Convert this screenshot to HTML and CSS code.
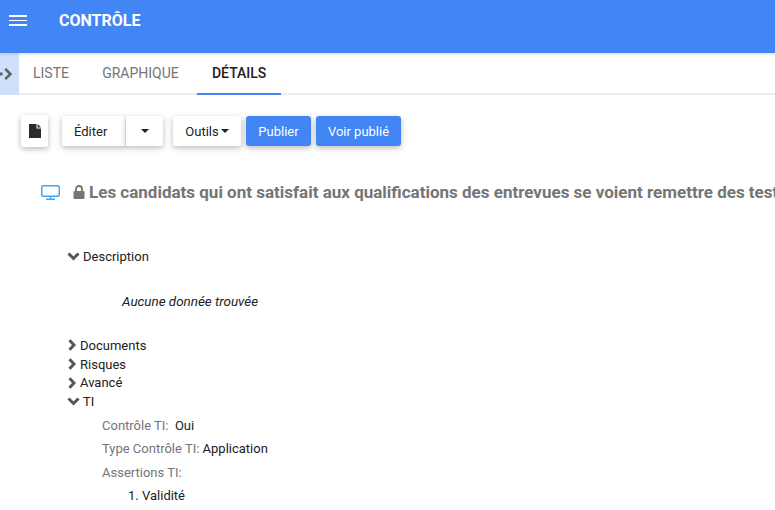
FILE: index.html
```html
<!DOCTYPE html>
<html lang="fr">
<head>
<meta charset="utf-8">
<title>Contrôle</title>
<link rel="stylesheet" href="styles.css">
</head>
<body>
<header class="appbar">
  <div class="burger"><span></span><span></span><span></span></div>
  <h1 class="apptitle">CONTRÔLE</h1>
</header>
<nav class="tabbar">
  <div class="sidetoggle">
    <svg width="12" height="14" viewBox="0 0 12 14"><path d="M0 7h2.6" stroke="#616161" stroke-width="3" fill="none"/><path d="M5.2 1.8L10.4 7l-5.2 5.2" stroke="#616161" stroke-width="2.6" fill="none"/></svg>
  </div>
  <a class="tab">LISTE</a>
  <a class="tab">GRAPHIQUE</a>
  <a class="tab active">DÉTAILS</a>
</nav>
<main class="content">
  <div class="toolbar">
    <button class="btn icon-btn">
      <svg width="12" height="14" viewBox="0 0 12 14"><path d="M0 0h7.5v4.5H12V14H0z" fill="#2b2b2b"/><path d="M8.5 0L12 3.5H8.5z" fill="#2b2b2b"/></svg>
    </button>
    <div class="btn-group">
      <button class="btn edit">Éditer</button>
      <button class="btn split"><span class="caret"></span></button>
    </div>
    <button class="btn tools">Outils<span class="caret small"></span></button>
    <button class="btn primary publish">Publier</button>
    <button class="btn primary view">Voir publié</button>
  </div>
  <div class="titlerow">
    <svg class="monitor" width="19" height="15" viewBox="0 0 19 15"><rect x="0.75" y="0.75" width="17.5" height="10.5" rx="1.5" fill="none" stroke="#42a5f5" stroke-width="1.5"/><path d="M9.5 11.5v2.5M5 14.25h9" stroke="#42a5f5" stroke-width="1.3" fill="none"/></svg>
    <svg class="lock" width="12" height="14" viewBox="0 0 12 14"><path d="M3 6V4a3 3 0 0 1 6 0v2" fill="none" stroke="#757575" stroke-width="1.8"/><rect x="0.5" y="6" width="11" height="8" rx="1" fill="#757575"/></svg>
    <h2 class="title">Les candidats qui ont satisfait aux qualifications des entrevues se voient remettre des tests</h2>
  </div>
  <section class="tree">
    <div class="node first">
      <svg class="chev down" width="13" height="9" viewBox="0 0 13 9"><path d="M1.5 1.5l5 5 5-5" fill="none" stroke="#555" stroke-width="3"/></svg>
      <span>Description</span>
    </div>
    <p class="empty">Aucune donnée trouvée</p>
    <div class="node">
      <svg class="chev right" width="8" height="12" viewBox="0 0 8 12"><path d="M1.5 1.2L6 6l-4.5 4.8" fill="none" stroke="#555" stroke-width="3"/></svg>
      <span>Documents</span>
    </div>
    <div class="node">
      <svg class="chev right" width="8" height="12" viewBox="0 0 8 12"><path d="M1.5 1.2L6 6l-4.5 4.8" fill="none" stroke="#555" stroke-width="3"/></svg>
      <span>Risques</span>
    </div>
    <div class="node">
      <svg class="chev right" width="8" height="12" viewBox="0 0 8 12"><path d="M1.5 1.2L6 6l-4.5 4.8" fill="none" stroke="#555" stroke-width="3"/></svg>
      <span>Avancé</span>
    </div>
    <div class="node">
      <svg class="chev down" width="13" height="9" viewBox="0 0 13 9"><path d="M1.5 1.5l5 5 5-5" fill="none" stroke="#555" stroke-width="3"/></svg>
      <span>TI</span>
    </div>
    <div class="fields">
      <div class="field"><span class="label">Contrôle TI:</span>&nbsp; Oui</div>
      <div class="field"><span class="label">Type Contrôle TI:</span> Application</div>
      <div class="field"><span class="label">Assertions TI:</span></div>
      <ol class="list"><li>Validité</li></ol>
    </div>
  </section>
</main>
</body>
</html>
```
FILE: styles.css
```css
* { box-sizing: border-box; }
html, body { margin: 0; padding: 0; height: 510px; overflow: hidden; background: #fff; }
body { font-family: Roboto, "Liberation Sans", sans-serif; font-size: 13px; color: #212121; }

.appbar { height: 53px; background: #4285f4; display: flex; align-items: flex-start; color: #fff; position: relative; z-index: 1; box-shadow: 0 1px 3px rgba(0,0,0,.15); }
.burger { width: 18px; margin: 15px 0 0 9px; display: flex; flex-direction: column; gap: 3px; }
.burger span { display: block; height: 1.7px; background: #fff; }
.apptitle { margin: 12px 0 0 32px; font-size: 16px; line-height: 18px; font-weight: 700; }

.tabbar { height: 42px; display: flex; border-bottom: 2px solid #eee; }
.sidetoggle { width: 19px; height: 42px; background: #cfe0fb; display: flex; align-items: center; justify-content: flex-start; }
.tab { height: 42px; font-size: 14px; line-height: 41px; color: #757575; padding: 0 15px; margin-right: 3.2px; }
.tab.active { color: #212121; border-bottom: 2px solid #4285f4; font-weight: 500; margin-right: 0; }
.sidetoggle + .tab { margin-left: -1px; }

.content { padding: 20px 0 0 21px; }
.toolbar { display: flex; align-items: flex-start; height: 32px; }
.btn { border: 0; background: #fff; font: inherit; font-size: 13px; color: #212121; padding: 0; height: 30px; margin-top: 1px; border-radius: 2px; box-shadow: 0 2px 5px rgba(0,0,0,.18), 0 2px 8px rgba(0,0,0,.1); display: flex; align-items: center; justify-content: center; }
.icon-btn { width: 27px; height: 32px; margin-top: 0; margin-right: 14px; }
.btn-group { display: flex; margin-right: 10px; }
.edit { width: 64px; border-radius: 2px 0 0 2px; border-right: 1px solid #eee; justify-content: flex-start; padding-left: 12px; }
.split { width: 37px; border-radius: 0 2px 2px 0; }
.tools { width: 68px; margin-right: 5px; }
.primary { background: #4285f4; color: #fff; border-radius: 3px; }
.publish { width: 65px; margin-right: 5px; }
.view { width: 85px; }
.caret { display: inline-block; border-left: 4.5px solid transparent; border-right: 4.5px solid transparent; border-top: 4.5px solid #212121; }
.caret.small { margin-left: 2px; }

.titlerow { display: flex; align-items: center; height: 22px; margin: 34px 0 0 20px; white-space: nowrap; }
.monitor { flex: none; margin-right: 13px; }
.lock { flex: none; margin-right: 4px; }
.title { margin: 0; font-size: 17px; line-height: 22px; font-weight: 700; color: #757575; }

.tree { margin: 0 0 0 46px; }
.node { display: flex; align-items: center; height: 18.75px; line-height: 19px; }
.node.first { margin-top: 44px; }
.chev { flex: none; }
.chev.down { margin-right: 3px; }
.chev.right { margin-left: 1px; margin-right: 4px; }
.empty { margin: 0 0 0 55px; padding: 28px 0 0; line-height: 15px; font-style: italic; font-size: 13.4px; height: 70.25px; }
.fields { margin-left: 35px; padding-top: 2.5px; }
.field { line-height: 23.5px; height: 23.5px; }
.label { color: #757575; }
.list { margin: 0; padding-left: 40px; line-height: 23.5px; }
```
